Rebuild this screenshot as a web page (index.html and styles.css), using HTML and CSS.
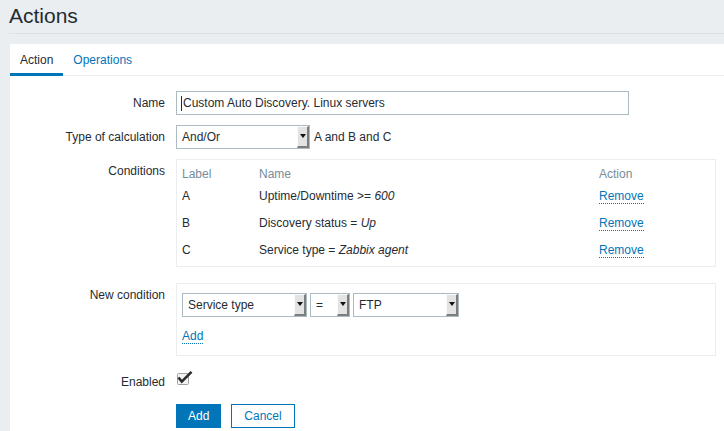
FILE: index.html
```html
<!DOCTYPE html>
<html lang="en">
<head>
<meta charset="utf-8">
<title>Actions</title>
<link rel="stylesheet" href="styles.css">
</head>
<body>
<header class="page-header">
  <h1 class="page-title">Actions</h1>
</header>
<main class="panel">
  <nav class="tabs">
    <a class="tab tab-active">Action</a>
    <a class="tab">Operations</a>
  </nav>
  <form class="form">
    <div class="row">
      <label class="label">Name</label>
      <div class="field">
        <div class="text-input"><span class="caret"></span>Custom Auto Discovery. Linux servers</div>
      </div>
    </div>
    <div class="row row-gap10">
      <label class="label">Type of calculation</label>
      <div class="field field-inline">
        <div class="select select-calc"><span class="select-value">And/Or</span><span class="select-arrow"></span></div>
        <span class="calc-text">A and B and C</span>
      </div>
    </div>
    <div class="row row-gap10">
      <label class="label">Conditions</label>
      <div class="field">
        <div class="box conditions-box">
          <table class="cond-table">
            <thead>
              <tr><th class="col-label">Label</th><th class="col-name">Name</th><th>Action</th></tr>
            </thead>
            <tbody>
              <tr><td>A</td><td>Uptime/Downtime &gt;= <em>600</em></td><td><a class="link">Remove</a></td></tr>
              <tr><td>B</td><td>Discovery status = <em>Up</em></td><td><a class="link">Remove</a></td></tr>
              <tr><td>C</td><td>Service type = <em>Zabbix agent</em></td><td><a class="link">Remove</a></td></tr>
            </tbody>
          </table>
        </div>
      </div>
    </div>
    <div class="row row-gap16">
      <label class="label">New condition</label>
      <div class="field">
        <div class="box newcond-box">
          <div class="select-group">
            <div class="select select-type"><span class="select-value">Service type</span><span class="select-arrow"></span></div>
            <div class="select select-op"><span class="select-value">=</span><span class="select-arrow"></span></div>
            <div class="select select-svc"><span class="select-value">FTP</span><span class="select-arrow"></span></div>
          </div>
          <div class="add-line"><a class="link">Add</a></div>
        </div>
      </div>
    </div>
    <div class="row row-gap14">
      <label class="label">Enabled</label>
      <div class="field">
        <svg class="checkbox" width="18" height="16" viewBox="0 0 18 16">
          <rect x="1.5" y="3.5" width="11" height="11" rx="1" fill="#f2f2f2" stroke="#a0a0a0"/>
          <path d="M2.5 7.5 L5.8 11.6 L15.5 1.8" fill="none" stroke="#2a2a2a" stroke-width="2.6" stroke-linejoin="miter"/>
        </svg>
      </div>
    </div>
    <div class="row row-gap10">
      <span class="label"></span>
      <div class="field field-buttons">
        <button type="button" class="btn btn-primary">Add</button>
        <button type="button" class="btn btn-alt">Cancel</button>
      </div>
    </div>
  </form>
</main>
</body>
</html>
```
FILE: styles.css
```css
html, body {
  margin: 0;
  padding: 0;
}
body {
  background: #ebeef0;
  color: #1f2c33;
  font-family: "Liberation Sans", Arial, sans-serif;
  font-size: 12px;
  line-height: 14px;
  overflow: hidden;
}
.page-header {
  margin-left: 9px;
  padding: 4px 0 5px 0;
  border-bottom: 1px solid #dce1e4;
}
.page-title {
  margin: 0;
  font-size: 21px;
  font-weight: normal;
  line-height: 24px;
  color: #1f2c33;
}
.panel {
  display: block;
  margin: 10px 0 0 10px;
  background: #ffffff;
  min-height: 400px;
}
.tabs {
  display: flex;
  border-bottom: 1px solid #ebeef0;
}
.tab {
  padding: 9px 10px 6px;
  line-height: 14px;
  border-bottom: 3px solid transparent;
  margin-bottom: -1px;
  color: #0275b8;
  cursor: pointer;
}
.tab-active {
  color: #1f2c33;
  border-bottom-color: #0275b8;
}
.form {
  padding: 15px 8px 0 0;
}
.row {
  display: grid;
  grid-template-columns: 155px 1fr;
  column-gap: 11px;
}
.row-gap10 { margin-top: 10px; }
.row-gap14 { margin-top: 14px; }
.row-gap16 { margin-top: 16px; }
.label {
  text-align: right;
  padding-top: 5px;
  line-height: 14px;
  color: #1f2c33;
}
.field {
  min-height: 24px;
}
.field-inline {
  display: flex;
  align-items: center;
  gap: 4px;
}
.text-input {
  box-sizing: border-box;
  width: 453px;
  height: 24px;
  border: 1px solid #acbbc2;
  padding: 0 4px;
  line-height: 22px;
  display: flex;
  align-items: center;
  white-space: nowrap;
}
.caret {
  display: inline-block;
  width: 1px;
  height: 15px;
  background: #1f2c33;
  margin-right: 1px;
}
.select {
  box-sizing: border-box;
  height: 24px;
  border: 1px solid #acbbc2;
  display: flex;
  align-items: stretch;
  background: #fff;
}
.select-value {
  flex: 1;
  padding-left: 5px;
  line-height: 22px;
  white-space: nowrap;
  overflow: hidden;
}
.select-arrow {
  box-sizing: border-box;
  width: 12px;
  background: #e3e3e3;
  border-top: 1px solid #fafafa;
  border-left: 1px solid #fafafa;
  border-right: 2px solid #7d7d7d;
  border-bottom: 2px solid #7d7d7d;
  display: flex;
  align-items: center;
  justify-content: center;
}
.select-arrow::after {
  content: "";
  width: 0;
  height: 0;
  border-left: 3px solid transparent;
  border-right: 3px solid transparent;
  border-top: 4px solid #111;
  margin-bottom: 1px;
}
.select-calc { width: 134px; }
.select-type { width: 125px; }
.select-op { width: 40px; }
.select-svc { width: 106px; }
.calc-text {
  line-height: 14px;
}
.box {
  border: 1px solid #ebeef0;
}
.conditions-box {
  padding: 5px 5px 3px;
}
.cond-table {
  border-collapse: collapse;
  width: 100%;
}
.cond-table th {
  text-align: left;
  font-weight: normal;
  color: #768d99;
  height: 17px;
  padding: 0;
  vertical-align: middle;
}
.cond-table td {
  height: 27px;
  padding: 0;
  vertical-align: middle;
}
.col-label { width: 77px; }
.col-name { width: 340px; }
.link {
  color: #0275b8;
  border-bottom: 1px dotted #0275b8;
  cursor: pointer;
}
.newcond-box {
  padding: 9px 5px 12px;
}
.select-group {
  display: flex;
  gap: 3px;
}
.add-line {
  margin-top: 12px;
  line-height: 14px;
}
.checkbox {
  display: block;
}
.field-buttons {
  display: flex;
  gap: 10px;
}
.btn {
  box-sizing: border-box;
  height: 24px;
  border: 1px solid #0275b8;
  font-family: "Liberation Sans", Arial, sans-serif;
  font-size: 12px;
  line-height: 22px;
  margin: 0;
  cursor: pointer;
}
.btn-primary {
  background: #0275b8;
  color: #fff;
  padding: 0 11px;
}
.btn-alt {
  background: #fff;
  color: #0275b8;
  padding: 0 12px;
}
```
